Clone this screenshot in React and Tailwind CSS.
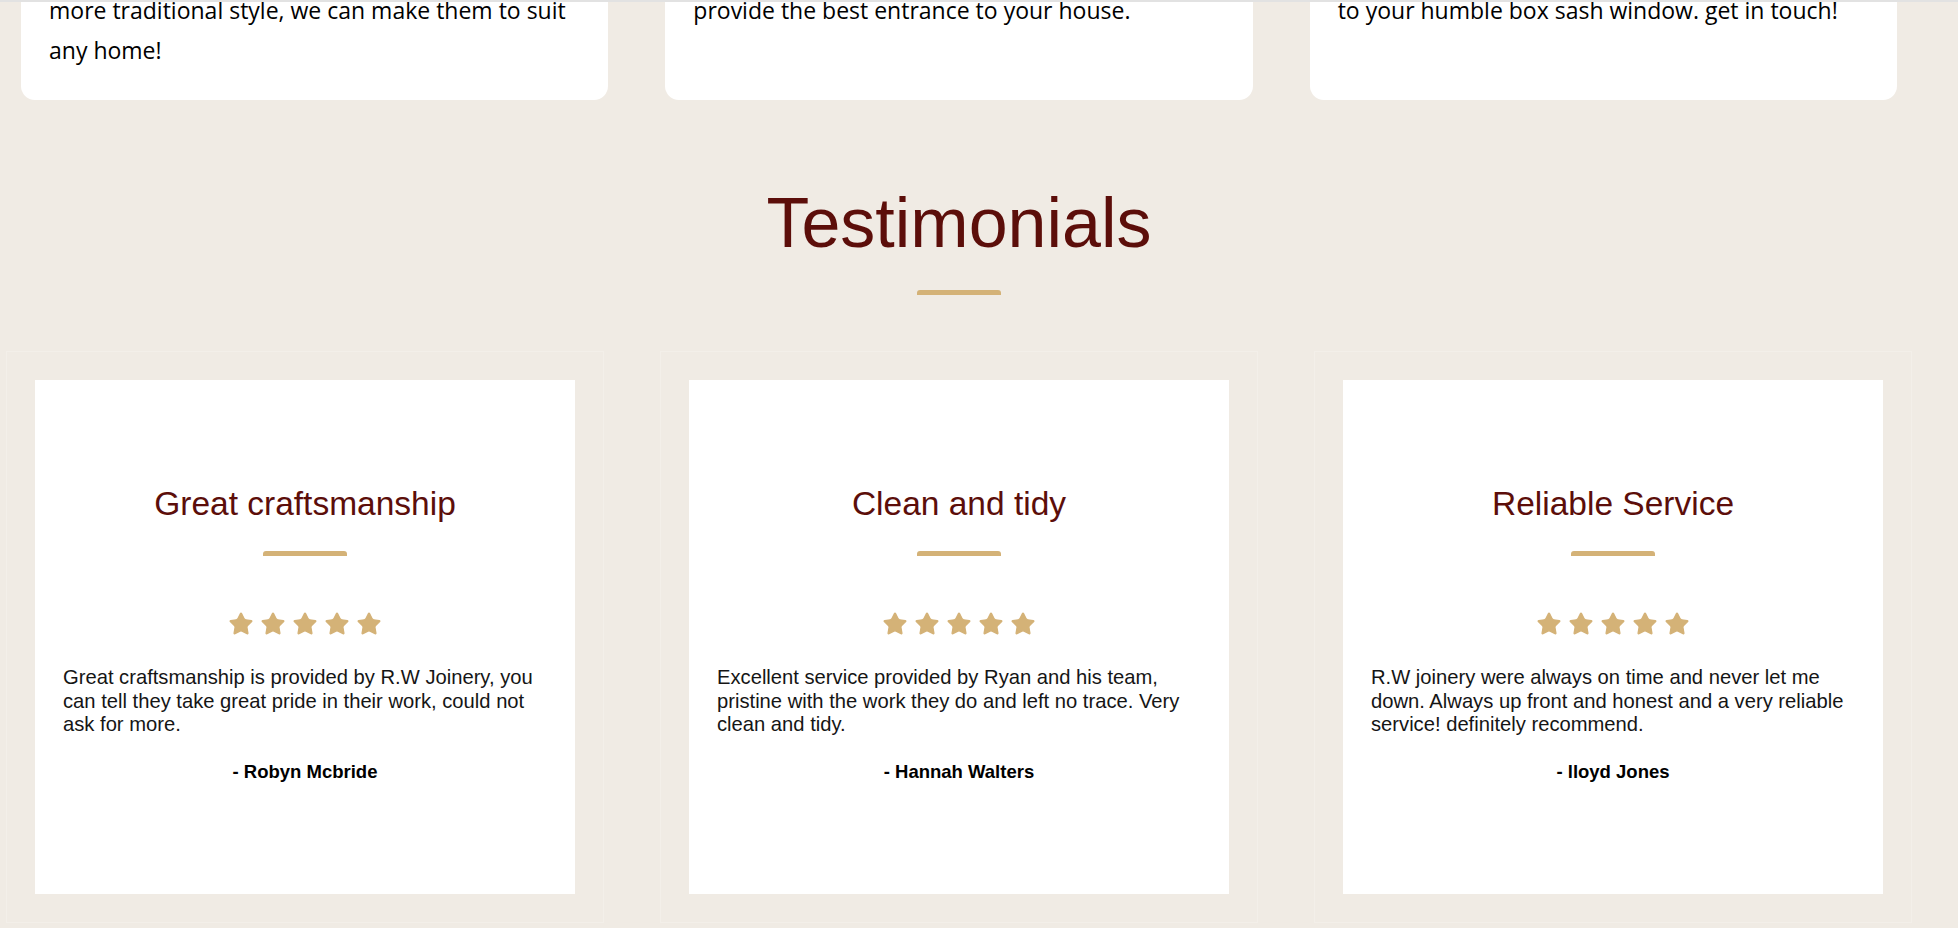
import { Star } from "lucide-react";

const services = [
  { text: ["more traditional style, we can make them to suit", "any home!"] },
  { text: ["provide the best entrance to your house."] },
  { text: ["to your humble box sash window. get in touch!"] },
];

const testimonials = [
  {
    title: "Great craftsmanship",
    body: "Great craftsmanship is provided by R.W Joinery, you can tell they take great pride in their work, could not ask for more.",
    author: "- Robyn Mcbride",
  },
  {
    title: "Clean and tidy",
    body: "Excellent service provided by Ryan and his team, pristine with the work they do and left no trace. Very clean and tidy.",
    author: "- Hannah Walters",
  },
  {
    title: "Reliable Service",
    body: "R.W joinery were always on time and never let me down. Always up front and honest and a very reliable service! definitely recommend.",
    author: "- lloyd Jones",
  },
];

function Stars() {
  return (
    <div className="flex justify-center gap-[6px]">
      {[0, 1, 2, 3, 4].map((i) => (
        <Star key={i} size={26} strokeWidth={1.2} fill="#d4b277" color="#d4b277" />
      ))}
    </div>
  );
}

export default function App() {
  return (
    <div className="min-h-screen w-full overflow-hidden bg-[#f0ebe4] border-t-2 border-[#e2e2e2]">
      <div className="w-[1918px]">
        {/* service cards, scrolled past */}
        <div className="grid grid-cols-3 gap-[57px] px-[21px] -mt-[12px]">
          {services.map((s, i) => (
            <div
              key={i}
              className="bg-white rounded-b-[14px] px-7 pb-[30px] text-[23px] leading-[40px] text-black font-['Open_Sans',sans-serif]"
            >
              {s.text.map((line, j) => (
                <p key={j} className="whitespace-nowrap">
                  {line}
                </p>
              ))}
              {s.text.length === 1 && <p>&nbsp;</p>}
            </div>
          ))}
        </div>

        <h2 className="mt-[89px] text-center text-[70px] leading-[69px] text-[#5c0e0a] font-['Liberation_Sans',Arial,sans-serif]">
          Testimonials
        </h2>
        <div className="mx-auto mt-[32px] h-[5px] w-[84px] rounded-t-[3px] bg-[#d4b277]" />

        <div className="mt-[56px] grid grid-cols-3 gap-[56px] px-[6px] font-['Liberation_Sans',Arial,sans-serif]">
          {testimonials.map((t) => (
            <div key={t.title} className="border border-[#f3efe9] p-[28px]">
              <div className="h-[514px] bg-white px-[28px] pt-[104px]">
                <h3 className="text-center text-[33.5px] leading-[40px] text-[#5c0e0a]">{t.title}</h3>
                <div className="mx-auto mt-[27px] h-[5px] w-[84px] rounded-t-[3px] bg-[#d4b277]" />
                <div className="mt-[55px]">
                  <Stars />
                </div>
                <p className="mt-[29px] text-[20.2px] leading-[23.5px] text-[#151515]">{t.body}</p>
                <p className="mt-[24px] text-center text-[18.5px] leading-[22px] font-bold text-black">
                  {t.author}
                </p>
              </div>
            </div>
          ))}
        </div>
      </div>
    </div>
  );
}
